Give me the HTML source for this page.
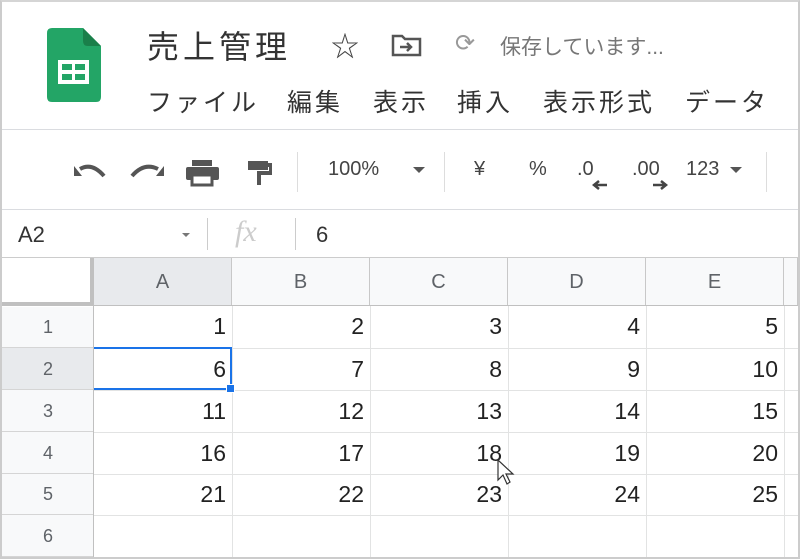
<!DOCTYPE html>
<html><head><meta charset="utf-8"><style>
*{margin:0;padding:0;box-sizing:border-box}
body{width:800px;height:559px;overflow:hidden;background:#fff;font-family:"Liberation Sans","Noto Sans CJK JP",sans-serif;position:relative;color:#3c4043}
.a{position:absolute}
.frame{left:0;top:0;width:800px;height:559px;border:2px solid #ccc;border-top:2px solid #d5d5d5}
.hl{position:absolute;height:1px;background:#dadce0}
.vl{position:absolute;width:1px;background:#e2e3e3}
.ch{position:absolute;top:258px;height:48px;background:#f8f9fa;font-size:20px;color:#5f6368;text-align:center;line-height:48px;border-right:1px solid #c8c8c8}
.rh{position:absolute;left:2px;width:92px;background:#f8f9fa;font-size:18px;color:#5f6368;text-align:center;border-bottom:1px solid #d5d5d5}
.c{position:absolute;font-size:23px;color:#222;text-align:right;width:130px}
.tb{font-size:20px;color:#444;position:absolute;top:158px}
.m{position:absolute;top:83px;font-size:25px;color:#333;letter-spacing:3px;white-space:nowrap}
</style></head><body>
<svg class="a" style="left:47px;top:28px" width="54" height="74" viewBox="0 0 54 74">
<path d="M5 0H36L54 18V69Q54 74 49 74H5Q0 74 0 69V5Q0 0 5 0Z" fill="#23a566"/>
<path d="M36 0V13Q36 18 41 18H54Z" fill="#1a7f4a"/>
<rect x="11" y="32" width="31" height="24" fill="#fff"/>
<rect x="15" y="36" width="10" height="6" fill="#23a566"/><rect x="28" y="36" width="10" height="6" fill="#23a566"/>
<rect x="15" y="46" width="10" height="6" fill="#23a566"/><rect x="28" y="46" width="10" height="6" fill="#23a566"/>
</svg>
<div class="a" style="left:147px;top:22px;font-size:32px;color:#333;letter-spacing:4px">売上管理</div>
<div class="a" style="left:331px;top:25px;font-size:28px;color:#444">☆</div>
<svg class="a" style="left:391px;top:33px" width="32" height="24" viewBox="0 0 32 24"><path d="M2 3h9l3 3h15v16H2Z" fill="none" stroke="#555" stroke-width="2.5"/><path d="M9 14h11M16 10l4 4-4 4" fill="none" stroke="#555" stroke-width="2.5"/></svg>
<div class="a" style="left:455px;top:29px;font-size:24px;color:#999">⟳</div>
<div class="a" style="left:500px;top:31px;font-size:21px;color:#777">保存しています...</div>
<div class="m" style="left:147px">ファイル</div>
<div class="m" style="left:287px">編集</div>
<div class="m" style="left:373px">表示</div>
<div class="m" style="left:457px">挿入</div>
<div class="m" style="left:543px">表示形式</div>
<div class="m" style="left:685px">データ</div>
<div class="hl" style="left:0;top:129px;width:800px"></div>
<svg class="a" style="left:72px;top:160px" width="200" height="28" viewBox="0 0 200 28">
<path d="M8 9 Q20 2 32 16" fill="none" stroke="#555" stroke-width="4"/><path d="M2 6 L10 16 L2 16Z" fill="#555"/>
<path d="M60 16 Q72 2 86 9" fill="none" stroke="#555" stroke-width="4"/><path d="M92 6 L84 16 L92 16Z" fill="#555"/>
<rect x="120" y="0" width="20" height="6" fill="#555"/><rect x="114" y="7" width="33" height="13" rx="2" fill="#555"/><rect x="120" y="15" width="20" height="10" fill="#fff" stroke="#555" stroke-width="3"/>
<rect x="176" y="1" width="20" height="9" fill="#555"/><path d="M196 5h3v8h-12v12" fill="none" stroke="#555" stroke-width="4"/>
</svg>
<div class="vl" style="left:297px;top:152px;height:40px;background:#ddd"></div>
<div class="tb" style="left:328px">100%</div>
<div class="a" style="left:413px;top:167px;border:6px solid transparent;border-top:6px solid #555"></div>
<div class="vl" style="left:444px;top:152px;height:40px;background:#ddd"></div>
<div class="tb" style="left:474px">¥</div>
<div class="tb" style="left:529px">%</div>
<div class="tb" style="left:577px">.0</div>
<svg class="a" style="left:592px;top:180px" width="16" height="10"><path d="M15 5H4M7 1L2 5l5 4" fill="none" stroke="#444" stroke-width="2.5"/></svg>
<div class="tb" style="left:632px">.00</div>
<svg class="a" style="left:652px;top:180px" width="16" height="10"><path d="M1 5h11M9 1l5 4-5 4" fill="none" stroke="#444" stroke-width="2.5"/></svg>
<div class="tb" style="left:686px">123</div>
<div class="a" style="left:730px;top:167px;border:6px solid transparent;border-top:6px solid #555"></div>
<div class="vl" style="left:766px;top:152px;height:40px;background:#ddd"></div>
<div class="hl" style="left:0;top:209px;width:800px"></div>
<div class="a" style="left:18px;top:222px;font-size:22px;color:#333">A2</div>
<div class="a" style="left:182px;top:233px;border:4px solid transparent;border-top:4px solid #777"></div>
<div class="vl" style="left:207px;top:218px;height:32px;background:#ccc"></div>
<div class="a" style="left:235px;top:215px;font-size:30px;color:#ccc;font-family:'Liberation Serif',serif;font-style:italic">fx</div>
<div class="vl" style="left:295px;top:218px;height:32px;background:#ccc"></div>
<div class="a" style="left:316px;top:222px;font-size:22px;color:#333">6</div>
<div class="hl" style="left:0;top:257px;width:800px;background:#ccc"></div>
<div class="a" style="left:2px;top:258px;width:92px;height:48px;background:#fff;border-right:4px solid #c0c0c0;border-bottom:4px solid #c0c0c0"></div>
<div class="ch" style="left:94px;width:138px;background:#e8eaed">A</div>
<div class="ch" style="left:232px;width:138px">B</div>
<div class="ch" style="left:370px;width:138px">C</div>
<div class="ch" style="left:508px;width:138px">D</div>
<div class="ch" style="left:646px;width:138px">E</div>
<div class="ch" style="left:784px;width:14px"></div>
<div class="hl" style="left:0;top:305px;width:800px;background:#c0c0c0"></div>
<div class="rh" style="top:307px;height:41px;line-height:41px">1</div>
<div class="rh" style="top:348px;height:42px;line-height:42px;background:#e8eaed">2</div>
<div class="rh" style="top:390px;height:42px;line-height:42px">3</div>
<div class="rh" style="top:432px;height:42px;line-height:42px">4</div>
<div class="rh" style="top:474px;height:41px;line-height:41px">5</div>
<div class="rh" style="top:515px;height:42px;line-height:42px">6</div>
<div class="vl" style="left:93px;top:306px;height:252px;background:#c0c0c0"></div>
<div class="vl" style="left:232px;top:306px;height:252px"></div>
<div class="vl" style="left:370px;top:306px;height:252px"></div>
<div class="vl" style="left:508px;top:306px;height:252px"></div>
<div class="vl" style="left:646px;top:306px;height:252px"></div>
<div class="vl" style="left:784px;top:306px;height:252px"></div>
<div class="hl" style="left:94px;top:348px;width:704px;background:#e2e3e3"></div>
<div class="hl" style="left:94px;top:390px;width:704px;background:#e2e3e3"></div>
<div class="hl" style="left:94px;top:432px;width:704px;background:#e2e3e3"></div>
<div class="hl" style="left:94px;top:474px;width:704px;background:#e2e3e3"></div>
<div class="hl" style="left:94px;top:515px;width:704px;background:#e2e3e3"></div>
<div class="c" style="left:96px;top:313px">1</div><div class="c" style="left:234px;top:313px">2</div><div class="c" style="left:372px;top:313px">3</div><div class="c" style="left:510px;top:313px">4</div><div class="c" style="left:648px;top:313px">5</div>
<div class="c" style="left:96px;top:356px">6</div><div class="c" style="left:234px;top:356px">7</div><div class="c" style="left:372px;top:356px">8</div><div class="c" style="left:510px;top:356px">9</div><div class="c" style="left:648px;top:356px">10</div>
<div class="c" style="left:96px;top:398px">11</div><div class="c" style="left:234px;top:398px">12</div><div class="c" style="left:372px;top:398px">13</div><div class="c" style="left:510px;top:398px">14</div><div class="c" style="left:648px;top:398px">15</div>
<div class="c" style="left:96px;top:440px">16</div><div class="c" style="left:234px;top:440px">17</div><div class="c" style="left:372px;top:440px">18</div><div class="c" style="left:510px;top:440px">19</div><div class="c" style="left:648px;top:440px">20</div>
<div class="c" style="left:96px;top:481px">21</div><div class="c" style="left:234px;top:481px">22</div><div class="c" style="left:372px;top:481px">23</div><div class="c" style="left:510px;top:481px">24</div><div class="c" style="left:648px;top:481px">25</div>
<div class="a" style="left:94px;top:347px;width:138px;height:43px;border:2px solid #1a73e8;border-left:none"></div>
<div class="a" style="left:226px;top:384px;width:9px;height:9px;background:#1a73e8;border:1px solid #fff"></div>
<svg class="a" style="left:496px;top:458px" width="24" height="32" viewBox="0 0 24 32"><path d="M2 2V22L7 17L11 26L14 24L10 16H17Z" fill="#fff" stroke="#333" stroke-width="1.2"/></svg>
<div class="a frame"></div>
</body></html>
